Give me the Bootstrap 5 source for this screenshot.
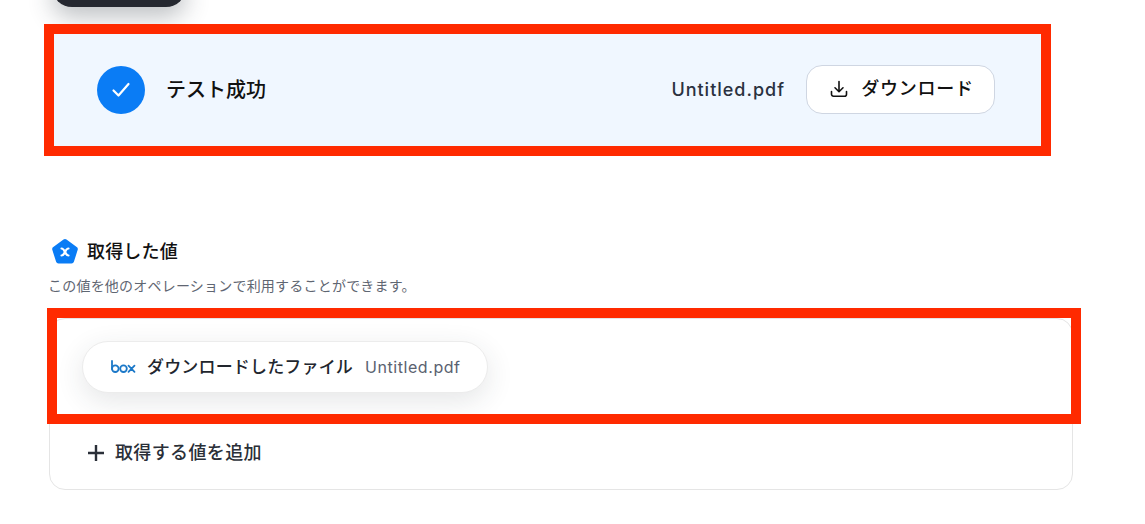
<!DOCTYPE html>
<html lang="ja">
<head>
<meta charset="utf-8">
<title>テスト成功</title>
<link href="https://cdn.jsdelivr.net/npm/bootstrap@5.3.0/dist/css/bootstrap.min.css" rel="stylesheet">
<style>
html,body{height:524px;overflow:hidden;background:#fff;}
body{font-family:Inter,"Noto Sans CJK JP",sans-serif;color:#111;}
.top-pill{margin:-33px 0 0 52px;width:134px;height:40px;background:#252830;border-radius:20px;box-shadow:0 10px 24px rgba(40,50,60,.3);}
.result-panel{margin:17px 0 0 44px;width:1007px;height:132px;background:#f0f7ff;border:10px solid #ff2a00;padding:0 46px 0 43px;}
.ok-circle{width:48px;height:48px;border-radius:50%;background:#0a7cf5;flex:none;}
.ok-text{font-size:20px;font-weight:500;margin-left:21px;color:#111;}
.file-name{font-size:18px;font-weight:500;color:#2a3140;letter-spacing:.055em;margin-right:21px;padding-bottom:2px;}
.dl-btn{width:189px;height:49px;margin-bottom:1px;background:#fff;border:1px solid #cfd6e2;border-radius:16px;font-size:18px;font-weight:500;color:#111;letter-spacing:.04em;padding:0 0 2px 2px;}
.dl-btn svg{margin-right:4px;}
.val-head{margin:82px 0 0 51px;height:28px;}
.val-title{font-size:18px;font-weight:500;letter-spacing:.01em;margin-left:8px;color:#111;padding-bottom:2px;}
.val-note{margin:10px 0 0 48px;font-size:14px;letter-spacing:.015em;color:#5f6672;line-height:20px;}
.val-wrap{position:relative;margin:22px 0 0 49px;width:1024px;}
.val-card{height:172px;border:1px solid #e5e5e5;border-radius:16px;background:#fff;}
.val-chip{position:absolute;left:33px;top:23px;width:406px;height:52px;background:#fff;border:1px solid #ececec;border-radius:26px;box-shadow:0 8px 28px rgba(40,50,60,.12);padding-left:28px;}
.chip-name{font-size:17px;font-weight:500;color:#22262e;letter-spacing:.01em;margin-left:11px;padding-top:2px;white-space:nowrap;}
.chip-file{font-size:16px;color:#5a6270;letter-spacing:.035em;margin-left:12px;}
.add-row{position:absolute;left:38px;top:121px;font-size:18px;font-weight:500;color:#2a2f38;letter-spacing:.02em;}
.add-row svg{margin-right:10px;}
.red-frame{position:absolute;left:-2px;top:-10px;width:1034px;height:116px;border:10px solid #ff2a00;pointer-events:none;}
</style>
</head>
<body>
<div class="top-pill"></div>
<div class="result-panel d-flex align-items-center">
  <div class="ok-circle d-flex align-items-center justify-content-center">
    <svg width="20" height="16" viewBox="0 0 20 16" fill="none" stroke="#fff" stroke-width="2.200" stroke-linecap="round" stroke-linejoin="round"><path d="M2.500 8.500l5 5L17.500 2"/></svg>
  </div>
  <div class="ok-text">テスト成功</div>
  <div class="file-name ms-auto">Untitled.pdf</div>
  <button type="button" class="btn dl-btn d-flex align-items-center justify-content-center gap-2">
    <svg width="20" height="20" viewBox="0 0 20 20" fill="none" stroke="#111" stroke-width="1.600" stroke-linecap="round" stroke-linejoin="round"><path d="M10 2.500v10M6 8.800l4 3.900 4-3.900M2.500 12.500v2.700a2 2 0 0 0 2 2h11a2 2 0 0 0 2-2v-2.700"/></svg>
    <span>ダウンロード</span>
  </button>
</div>
<div class="val-head d-flex align-items-center">
  <svg width="28" height="28" viewBox="0 0 28 28"><path d="M14 1a2.500 2.500 0 0 1 1.500.5l10.200 7.500a2.500 2.500 0 0 1 1 2.800l-3.800 12a2.500 2.500 0 0 1-2.400 1.700H7.500a2.500 2.500 0 0 1-2.400-1.700L1.300 11.800a2.500 2.500 0 0 1 1-2.800L12.500 1.500A2.500 2.500 0 0 1 14 1z" fill="#0a7cf5"/><path d="M10.500 10.500c2 0 2.500 1.500 3.500 3.500s1.500 3.500 3.500 3.500M10.500 17.500c2 0 2.500-1.500 3.500-3.500s1.500-3.500 3.500-3.500" fill="none" stroke="#fff" stroke-width="2.200" stroke-linecap="round"/></svg>
  <div class="val-title">取得した値</div>
</div>
<div class="val-note">この値を他のオペレーションで利用することができます。</div>
<div class="val-wrap">
  <div class="val-card"></div>
  <div class="val-chip d-flex align-items-center">
    <svg width="25" height="14" viewBox="0 0 25 14" fill="none" stroke="#1b78c8" stroke-width="1.800" stroke-linecap="round"><path d="M1 1v8"/><circle cx="4.300" cy="8.700" r="3.300"/><circle cx="12.500" cy="8.700" r="3.300"/><path d="M17.500 5.700l6 6.200M23.500 5.700l-6 6.200"/></svg>
    <span class="chip-name">ダウンロードしたファイル</span>
    <span class="chip-file">Untitled.pdf</span>
  </div>
  <div class="add-row d-flex align-items-center">
    <svg width="18" height="18" viewBox="0 0 18 18" fill="none" stroke="#2a2f38" stroke-width="2.400"><path d="M9 1v16M1 9h16"/></svg>
    <span>取得する値を追加</span>
  </div>
  <div class="red-frame"></div>
</div>
<script src="https://cdn.jsdelivr.net/npm/bootstrap@5.3.0/dist/js/bootstrap.bundle.min.js"></script>
</body>
</html>
